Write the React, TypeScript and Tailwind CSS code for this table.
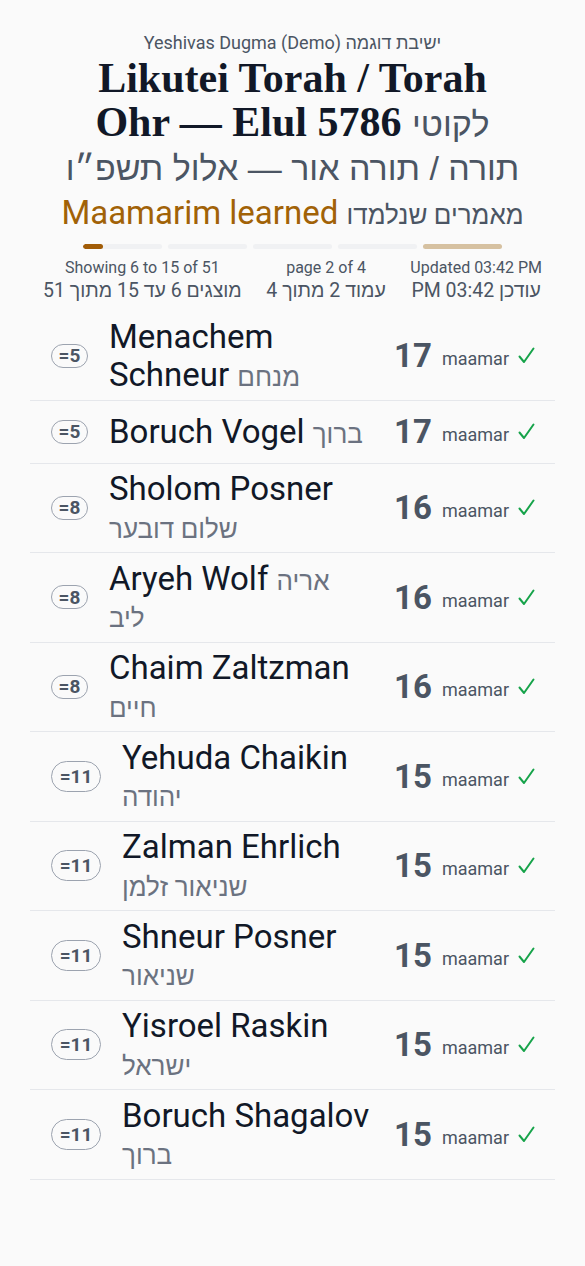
import clsx from "clsx";

type Row = { rank: string; en: string; he: string; count: number };

const rows: Row[] = [
  { rank: "=5", en: "Menachem Schneur", he: "מנחם", count: 17 },
  { rank: "=5", en: "Boruch Vogel", he: "ברוך", count: 17 },
  { rank: "=8", en: "Sholom Posner", he: "שלום דובער", count: 16 },
  { rank: "=8", en: "Aryeh Wolf", he: "אריה ליב", count: 16 },
  { rank: "=8", en: "Chaim Zaltzman", he: "חיים", count: 16 },
  { rank: "=11", en: "Yehuda Chaikin", he: "יהודה", count: 15 },
  { rank: "=11", en: "Zalman Ehrlich", he: "שניאור זלמן", count: 15 },
  { rank: "=11", en: "Shneur Posner", he: "שניאור", count: 15 },
  { rank: "=11", en: "Yisroel Raskin", he: "ישראל", count: 15 },
  { rank: "=11", en: "Boruch Shagalov", he: "ברוך", count: 15 },
];

const segments = [0, 1, 2, 3, 4];

function RankBadge({ rank }: { rank: string }) {
  const wide = rank.length > 2;
  return (
    <span
      className={clsx(
        "flex shrink-0 items-center justify-center rounded-full border-[1.5px] border-[#9ca3af] text-[19px] leading-none font-bold text-[#4b5563]",
        wide ? "h-[31px] w-[50px]" : "h-[24px] w-[37px]"
      )}
    >
      {rank}
    </span>
  );
}

function Check() {
  return (
    <svg viewBox="0 0 17 17" className="ml-[9px] h-[17px] w-[17px]" fill="none">
      <path
        d="M1.5 9.5 L6 15 L15.5 1.5"
        stroke="#16a34a"
        strokeWidth="2"
        strokeLinecap="round"
        strokeLinejoin="round"
      />
    </svg>
  );
}

function LeaderRow({ row }: { row: Row }) {
  return (
    <li className="flex items-center gap-[21px] border-b border-[#e5e7eb] py-[6.75px] pl-[21px] pr-5">
      <RankBadge rank={row.rank} />
      <div className="min-w-0 flex-1 pr-[2.5px] text-[33px] leading-[37.5px] text-[#111827]">
        {row.en}{" "}
        <span className="text-[26px] leading-none text-[#6b7280]">{row.he}</span>
      </div>
      <div className="flex h-[48px] shrink-0 items-center">
        <span className="text-[33px] font-bold text-[#4b5563]">{row.count}</span>
        <span className="ml-[10px] mt-[6px] text-[18px] text-[#4b5563]">maamar</span>
        <Check />
      </div>
    </li>
  );
}

export default function App() {
  return (
    <div
      className="min-h-screen bg-[#fafafa] px-[30px] pt-[30px] pb-10"
      style={{ fontFamily: "Roboto, 'Liberation Sans', sans-serif" }}
    >
      <header className="text-center">
        <p className="text-[18px] leading-[26px] text-[#4b5563]">Yeshivas Dugma (Demo) ישיבת דוגמה</p>
        <h1 className="mx-auto max-w-[470px] text-[42px] leading-[44px] [font-family:'Liberation_Serif',serif]">
          <span className="font-bold text-[#111827]">Likutei Torah / Torah Ohr — Elul 5786</span>{" "}
          <span className="text-[34px] leading-none font-normal text-[#4b5563] [font-family:'Liberation_Sans',sans-serif]">
            לקוטי תורה / תורה אור — אלול תשפ״ו
          </span>
        </h1>
        <h2 className="mt-[4px] text-[33px] leading-[42px]">
          <span className="text-[#a16207]">Maamarim learned</span>{" "}
          <span className="text-[26px] leading-none text-[#4b5563]">מאמרים שנלמדו</span>
        </h2>
        <div className="mx-auto mt-[10px] flex w-[419px] gap-[6px]">
          {segments.map((i) => (
            <div
              key={i}
              className={clsx(
                "h-[4.5px] flex-1 overflow-hidden rounded-full",
                i === 4 ? "bg-[#d6c1a1]" : "bg-[#f0f1f3]"
              )}
            >
              {i === 0 && <div className="h-full w-[20px] rounded-full bg-[#a15c07]" />}
            </div>
          ))}
        </div>
        <div className="mt-[7px] flex justify-between px-[13px] leading-[23px] text-[#4b5563]">
          <div>
            <p className="text-[16px]">Showing 6 to 15 of 51</p>
            <p dir="rtl" className="text-[19.5px]">מוצגים 6 עד 15 מתוך 51</p>
          </div>
          <div>
            <p className="text-[16px]">page 2 of 4</p>
            <p dir="rtl" className="text-[19.5px]">עמוד 2 מתוך 4</p>
          </div>
          <div>
            <p className="text-[16px]">Updated 03:42 PM</p>
            <p dir="rtl" className="text-[19.5px]">עודכן 03:42 PM</p>
          </div>
        </div>
      </header>

      <ul className="mt-[10px]">
        {rows.map((row) => (
          <LeaderRow key={row.en} row={row} />
        ))}
      </ul>
    </div>
  );
}
